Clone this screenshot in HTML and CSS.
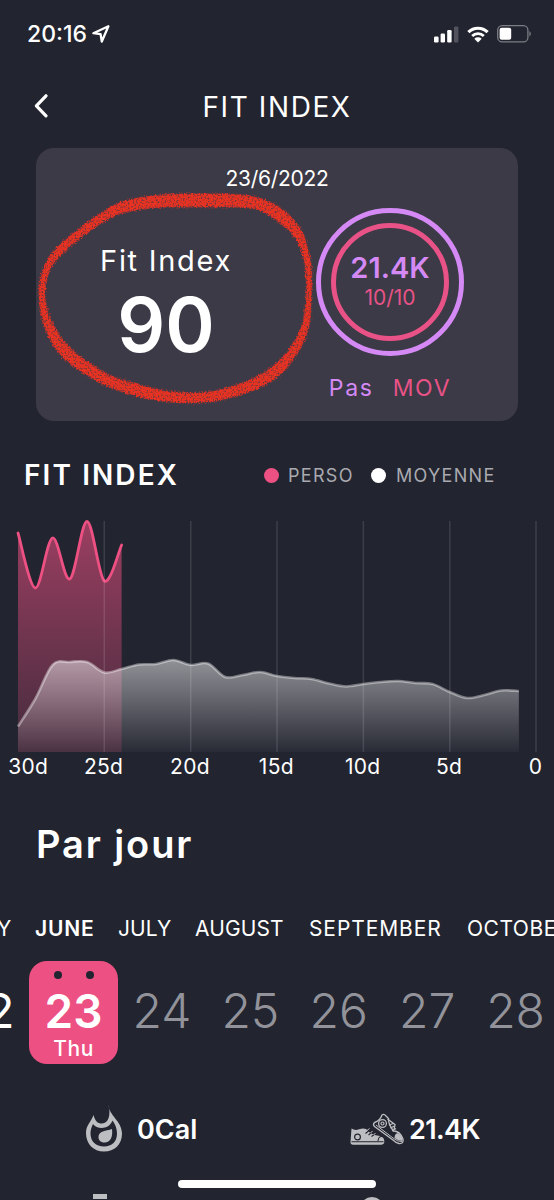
FILE: index.html
```html
<!DOCTYPE html>
<html lang="fr">
<head>
    <meta charset="UTF-8">
    <meta name="viewport" content="width=device-width, initial-scale=1.0">
    <title>Fit Index</title>
    <link rel="stylesheet" href="styles.css">
</head>
<body>
    <div class="status-bar">
        <span class="time">20:16</span>
        <svg class="location" width="18" height="18" viewBox="0 0 18 18">
            <path d="M16.4 1.2 L1.4 8.2 L8.6 9.2 L9.8 16.5 Z" fill="none" stroke="#fff" stroke-width="2.3" stroke-linejoin="round"/>
        </svg>
        <div class="status-icons">
            <svg width="25" height="17" viewBox="0 0 25 17">
                <rect x="0" y="10.5" width="4.6" height="6" rx="1.2" fill="#fff"/>
                <rect x="6.6" y="7.5" width="4.4" height="9" rx="1.2" fill="#fff"/>
                <rect x="13.2" y="4" width="4.4" height="12.5" rx="1.2" fill="#fff"/>
                <rect x="20" y="0.5" width="4.4" height="16" rx="1.2" fill="#52535c"/>
            </svg>
            <svg width="22" height="17" viewBox="0 0 22 17">
                <path d="M1.4 6.2 A13.6 13.6 0 0 1 20.6 6.2" fill="none" stroke="#fff" stroke-width="3.2"/>
                <path d="M5.2 10 A8.2 8.2 0 0 1 16.8 10" fill="none" stroke="#fff" stroke-width="2.8"/>
                <path d="M11 16.4 L7.3 12.8 A5.4 5.4 0 0 1 14.7 12.8 Z" fill="#fff"/>
            </svg>
            <svg width="35" height="18" viewBox="0 0 35 18">
                <rect x="0.7" y="0.7" width="30.2" height="16.2" rx="4.5" fill="none" stroke="#7b7c84" stroke-width="1.3"/>
                <rect x="2.6" y="2.8" width="11.6" height="12" rx="2" fill="#fff"/>
                <path d="M32.4 6 A3.4 3.4 0 0 1 32.4 11.6 Z" fill="#7b7c84"/>
            </svg>
        </div>
    </div>

    <header class="header">
        <svg class="back" width="14" height="26" viewBox="0 0 14 26">
            <path d="M12 2.8 L2.4 12.8 L12 22.8" fill="none" stroke="#fff" stroke-width="3.2" stroke-linecap="round" stroke-linejoin="round"/>
        </svg>
        <h1>FIT INDEX</h1>
    </header>

    <section class="card">
        <div class="date">23/6/2022</div>
        <div class="card-body">
            <div class="score">
                <div class="score-label">Fit Index</div>
                <div class="score-value">90</div>
            </div>
            <div class="rings">
                <div class="ring-outer">
                    <div class="ring-inner">
                        <div class="steps">21.4K</div>
                        <div class="mov">10/10</div>
                    </div>
                </div>
                <div class="ring-legend">
                    <span class="pas">Pas</span>
                    <span class="mov-label">MOV</span>
                </div>
            </div>
        </div>
        <svg class="marker" width="290" height="230" viewBox="30 185 290 230">
            <defs>
                <filter id="chalk" x="-5%" y="-5%" width="110%" height="110%">
                    <feTurbulence type="fractalNoise" baseFrequency="0.6" numOctaves="3" seed="4" result="noise"/>
                    <feDisplacementMap in="SourceGraphic" in2="noise" scale="5" xChannelSelector="R" yChannelSelector="G" result="rough"/>
                    <feColorMatrix in="noise" type="matrix" values="0 0 0 0 0  0 0 0 0 0  0 0 0 0 0  0 0 2.5 0 -0.25" result="grain"/>
                    <feComposite in="rough" in2="grain" operator="in"/>
                </filter>
            </defs>
            <path id="marker" fill="#e83024" stroke="#e83024" stroke-opacity="0.45" stroke-width="1.6" fill-rule="evenodd" filter="url(#chalk)"/>
        </svg>
    </section>

    <section class="chart-section">
        <div class="chart-head">
            <h2>FIT INDEX</h2>
            <div class="legend">
                <span class="dot pink"></span><span class="legend-perso">PERSO</span>
                <span class="dot white"></span><span class="legend-moy">MOYENNE</span>
            </div>
        </div>
        <svg class="chart" width="554" height="245" viewBox="0 510 554 245">
            <defs>
                <linearGradient id="pinkFill" gradientUnits="userSpaceOnUse" x1="0" y1="521" x2="0" y2="752">
                    <stop offset="0" stop-color="#ed5082" stop-opacity="0.6"/>
                    <stop offset="1" stop-color="#ed5082" stop-opacity="0.17"/>
                </linearGradient>
                <linearGradient id="whiteFill" gradientUnits="userSpaceOnUse" x1="0" y1="660" x2="0" y2="752">
                    <stop offset="0" stop-color="#fff" stop-opacity="0.5"/>
                    <stop offset="1" stop-color="#fff" stop-opacity="0.03"/>
                </linearGradient>
            </defs>
            <path id="persoArea" fill="url(#pinkFill)"/>
            <path id="persoLine" fill="none" stroke="#ed5082" stroke-width="2.8" stroke-linecap="round"/>
            <path id="moyArea" fill="url(#whiteFill)"/>
            <path id="moyLine" fill="none" stroke="#fff" stroke-opacity="0.4" stroke-width="2.6"/>
            <path d="M104.3 521V752 M190.7 521V752 M277 521V752 M363.4 521V752 M449.8 521V752 M536 521V752" stroke="#fff" stroke-opacity="0.12" stroke-width="1.5"/>
        </svg>
        <div class="axis">
            <span>30d</span><span>25d</span><span>20d</span><span>15d</span><span>10d</span><span>5d</span><span>0</span>
        </div>
    </section>

    <h2 class="day-title">Par jour</h2>

    <nav class="months">
        <span class="may">MAY</span>
        <span class="june">JUNE</span>
        <span class="july">JULY</span>
        <span class="august">AUGUST</span>
        <span class="september">SEPTEMBER</span>
        <span class="october">OCTOBER</span>
    </nav>

    <div class="days">
        <div class="day past">22</div>
        <div class="day selected">
            <div class="holes"><i></i><i></i></div>
            <div class="num">23</div>
            <div class="weekday">Thu</div>
        </div>
        <div class="day">24</div>
        <div class="day">25</div>
        <div class="day">26</div>
        <div class="day">27</div>
        <div class="day">28</div>
    </div>

    <div class="stats">
        <div class="stat">
            <svg class="flame" width="38" height="50" viewBox="0 0 38 50">
                <!-- flame body, then the hollow, then the drop -->
                <path d="M23.500 0.500 C24 12 37 17 37 29.500 C37 40.500 29.500 47.500 19 47.500 C8.500 47.500 1 40 1 29 C1 21 6 18 8.500 11 C10 17 12.500 19.500 17 19.500 C23.500 19.500 26 11 23.500 0.500 Z" fill="#bdbec2"/>
                <path d="M8 20 C12 25.500 24 26 27.500 16.500 C30 20 32 24 32 29.500 C32 37.500 27 42.500 19 42.500 C11 42.500 5.500 37.500 5.500 29.500 C5.500 26 6.500 23 8 20 Z" fill="#22242f"/>
                <path d="M27 25 C21 27 13.500 27 13.500 33 C13.500 37 16.500 38.500 19.500 38.500 C25.500 38.500 28 33 27 25 Z" fill="#bdbec2"/>
            </svg>
            <span class="cal">0Cal</span>
        </div>
        <div class="stat">
            <svg class="shoes" width="56" height="34" viewBox="0 0 56 34">
                <path d="M1.500 16.500 Q5 19 9 17.300 Q13 16 16 17 Q21 23 30 24 Q34.500 25 34.300 30 Q34 32.800 31 32.800 H3 Q0.500 32.800 0.500 30 Z" fill="#bdbec2"/>
                <path d="M1.500 29.800 H33.500 M33 24.800 Q28.500 23.500 28 29 M15.500 21.500 L19 18.500 M18.500 23 L22 20 M21.500 24.500 L25 22" stroke="#22242f" stroke-width="1.100" fill="none"/>
                <path d="M17 18.500 L19.500 16.500 M20.500 21 L22.500 19 M23.500 23 L25.500 21" stroke="#bdbec2" stroke-width="1"/>
                <circle cx="7.500" cy="25" r="2.900" fill="none" stroke="#22242f" stroke-width="1.200"/>
                <path d="M24.500 10.500 Q30 9 32 3 Q34 1.500 36 4 L38.500 6.500 Q38 12 43.500 19 Q50 19 53 27 Q54 32 49 31.500 Q46 31 43 28 L24.500 14.500 Q22.500 12.500 24.500 10.500 Z" fill="none" stroke="#bdbec2" stroke-width="1.300"/>
                <path d="M26 13 L43 26 Q48 30 52 29.500" fill="none" stroke="#bdbec2" stroke-width="1"/>
                <path d="M44.500 26 Q45 20.500 48.500 21.500 Q53 24 52.500 29 Q48 29 44.500 26 Z" fill="#bdbec2"/>
                <circle cx="32.500" cy="11.500" r="3.900" fill="none" stroke="#bdbec2" stroke-width="1.300"/>
                <circle cx="32.500" cy="11.500" r="1.500" fill="none" stroke="#bdbec2" stroke-width="1.200"/>
                <path d="M37.500 7 L45 12.500 L44 18 M39.500 13 L43 11.500 M40.500 16 L44.500 14 M42 19 L46 16.500" fill="none" stroke="#bdbec2" stroke-width="1.300"/>
            </svg>
            <span class="step-count">21.4K</span>
        </div>
    </div>

    <footer class="bottom">
        <div class="home-bar"></div>
        <div class="peek">
            <span class="peek-square"></span>
            <span class="peek-round"></span>
        </div>
    </footer>
    <script src="script.js"></script>
</body>
</html>
```
FILE: styles.css
```css
* {
    margin: 0;
    padding: 0;
    box-sizing: border-box;
}
body {
    width: 554px;
    height: 1200px;
    overflow: hidden;
    background: #22242f;
    color: #fff;
    font-family: Inter, sans-serif;
    display: flex;
    flex-direction: column;
}
svg {
    display: block;
    flex: none;
}
span, h1, h2 {
    white-space: nowrap;
}
.status-bar {
    height: 68px;
    padding: 0 22px 0 27px;
    display: flex;
    align-items: center;
}
.time {
    font-size: 23px;
    font-weight: 500;
    letter-spacing: 0;
}
.location {
    margin-left: 5px;
}
.status-icons {
    margin-left: auto;
    display: flex;
    align-items: center;
    gap: 8px;
}
.header {
    height: 80px;
    padding: 0 34px 4px;
    display: grid;
    grid-template-columns: 14px 1fr 14px;
    align-items: center;
}
h1 {
    padding-top: 2px;
    font-size: 28px;
    font-weight: 400;
    letter-spacing: 1.6px;
    text-align: center;
}
.card {
    position: relative;
    width: 482px;
    height: 273px;
    margin-left: 36px;
    border-radius: 18px;
    background: #3b3a46;
    padding-top: 18px;
}
.date {
    font-size: 21px;
    line-height: 26px;
    letter-spacing: -0.3px;
    text-align: center;
}
.card-body {
    display: flex;
}
.score {
    width: 260px;
    padding-top: 51px;
    text-align: center;
}
.score-label {
    font-size: 29px;
    line-height: 36px;
    letter-spacing: 1.7px;
}
.score-value {
    font-size: 75px;
    line-height: 92px;
    font-weight: 600;
}
.rings {
    width: 188px;
    padding-top: 16px;
    display: flex;
    flex-direction: column;
    align-items: center;
}
.ring-outer {
    width: 148px;
    height: 148px;
    padding: 10px;
    border: 5px solid #d489f5;
    border-radius: 50%;
}
.ring-inner {
    width: 118px;
    height: 118px;
    padding-top: 25px;
    border: 5px solid #e85286;
    border-radius: 50%;
    text-align: center;
}
.steps {
    font-size: 29px;
    line-height: 30px;
    font-weight: 600;
    color: #d489f5;
}
.mov {
    font-size: 21px;
    line-height: 30px;
    color: #e85286;
}
.ring-legend {
    margin-top: 17px;
    display: flex;
    gap: 19px;
    font-size: 23px;
    line-height: 30px;
    letter-spacing: 1.7px;
}
.pas {
    color: #d489f5;
}
.mov-label {
    color: #e85286;
}
.marker {
    position: absolute;
    left: -6px;
    top: 37px;
}
.chart-head {
    height: 89px;
    padding: 19px 0 0 24px;
    display: flex;
    align-items: center;
}
.chart-head h2 {
    width: 240px;
    font-size: 28px;
    font-weight: 600;
    letter-spacing: 2.1px;
}
.legend {
    display: flex;
    align-items: center;
    font-size: 18px;
    letter-spacing: 1.3px;
    color: #a9aab0;
}
.legend-perso {
    width: 65px;
    margin: 0 18px 0 9px;
}
.legend-moy {
    margin-left: 10px;
}
.dot {
    width: 15px;
    height: 15px;
    border-radius: 50%;
}
.pink {
    background: #ed5082;
}
.white {
    background: #fff;
}
.axis {
    height: 24px;
    margin: 0 -25px 0 -26px;
    display: flex;
    font-size: 21px;
    line-height: 24px;
    letter-spacing: 0.3px;
}
.axis span {
    width: 86.4px;
    flex: none;
    text-align: center;
}
.axis span:first-child {
    padding-left: 22px;
}
.day-title {
    height: 60px;
    margin: 35px 0 0 36px;
    font-size: 38px;
    line-height: 60px;
    font-weight: 600;
    letter-spacing: 1.9px;
}
.months {
    height: 45px;
    margin: 32px 0 0 -35px;
    display: flex;
    font-size: 21px;
    line-height: 45px;
    letter-spacing: 0.1px;
}
.months span {
    flex: none;
}
.may {
    width: 70px;
}
.june {
    width: 83px;
    font-weight: 600;
    letter-spacing: 0.8px;
}
.july {
    width: 77px;
}
.august {
    width: 114px;
}
.september {
    width: 158px;
    letter-spacing: 0.9px;
}
.october {
    letter-spacing: 0.5px;
}
.days {
    height: 112px;
    margin: 10px 0 0 -59px;
    display: flex;
    align-items: flex-start;
}
.day {
    width: 88.4px;
    flex: none;
    font-size: 48px;
    line-height: 100px;
    font-weight: 300;
    text-align: center;
    color: #92939a;
}
.past {
    color: #fff;
    font-weight: 400;
}
.selected {
    height: 103px;
    border-radius: 18px;
    background: #ed5082;
    color: #fff;
    font-weight: 600;
}
.holes {
    height: 25px;
    padding-top: 10px;
    display: flex;
    justify-content: center;
    gap: 24px;
}
.holes i {
    width: 8px;
    height: 8px;
    border-radius: 50%;
    background: #22242f;
}
.num {
    font-size: 46px;
    line-height: 50px;
}
.weekday {
    font-size: 21px;
    line-height: 26px;
    font-weight: 500;
    letter-spacing: 0.6px;
}
.stats {
    height: 100px;
    display: flex;
}
.stat {
    height: 100px;
    padding-top: 12px;
    display: flex;
    align-items: center;
    font-size: 27px;
    font-weight: 600;
}
.stat:first-child {
    width: 350px;
    padding-left: 85px;
    gap: 14px;
}
.stat:last-child {
    gap: 3px;
}
.step-count {
    letter-spacing: -0.6px;
}
.bottom {
    height: 20px;
    margin-top: auto;
}
.home-bar {
    width: 198px;
    height: 8px;
    margin-left: 178px;
    border-radius: 4px;
    background: #fff;
}
.peek {
    display: flex;
    align-items: flex-start;
    padding: 6px 0 0 93px;
}
.peek-square {
    width: 14px;
    height: 5px;
    background: #bdbec2;
}
.peek-round {
    width: 24px;
    height: 24px;
    margin: 3px 0 0 253px;
    border-radius: 50%;
    background: #bdbec2;
}
```
FILE: script.js
```javascript
const perso = [533, 588, 538, 579, 521.5, 581, 545];
const moyenne = [726.5, 699, 665, 662, 662, 672.5, 669, 664.5, 664, 660, 665, 663.5, 677, 675, 672, 676,
    678, 679, 683.5, 686.5, 684, 682, 681, 683, 684, 692, 698, 695, 690.5, 691];

// smooth curve that goes through all the points
function curve(p, closed) {
    const n = p.length;
    const at = i => closed ? p[(i + n) % n] : p[Math.max(0, Math.min(n - 1, i))];
    let d = `M${p[0][0]} ${p[0][1]}`;
    for (let i = 0; i < (closed ? n : n - 1); i++) {
        const a = at(i - 1), b = at(i), c = at(i + 1), e = at(i + 2);
        d += `C${b[0] + (c[0] - a[0]) / 6} ${b[1] + (c[1] - a[1]) / 6} ${c[0] - (e[0] - b[0]) / 6} ${c[1] - (e[1] - b[1]) / 6} ${c[0]} ${c[1]}`;
    }
    return d;
}

function drawSeries(name, values) {
    const points = values.map((y, i) => [18 + i * 17.27, y]);
    const line = curve(points, false);
    const end = points[points.length - 1][0];
    document.getElementById(name + "Line").setAttribute("d", line);
    document.getElementById(name + "Area").setAttribute("d", line + `L${end} 752L18 752Z`);
}

drawSeries("perso", perso);
drawSeries("moy", moyenne);

const outer = [[207, 194], [250, 196], [280, 208], [302, 232], [311, 265], [311, 300], [308, 330], [296, 355], [276, 378], [251, 391],
    [220, 400], [190, 403], [155, 400], [120, 391], [88, 376], [60, 354], [44, 325], [39, 295], [43, 270], [53, 252], [75, 232], [100, 214], [122, 202], [160, 195]];
const inner = [[207, 207], [252, 208], [276, 220], [296, 239], [305, 265], [306, 300], [301, 328], [288, 351], [268, 370], [245, 382],
    [215, 391], [190, 393], [160, 390], [130, 382], [105, 373], [68, 346], [50, 318], [45, 295], [49, 272], [60, 256], [84, 235], [110, 218], [130, 211], [165, 207]];
document.getElementById("marker").setAttribute("d", curve(outer, true) + "Z" + curve(inner, true) + "Z");
```
